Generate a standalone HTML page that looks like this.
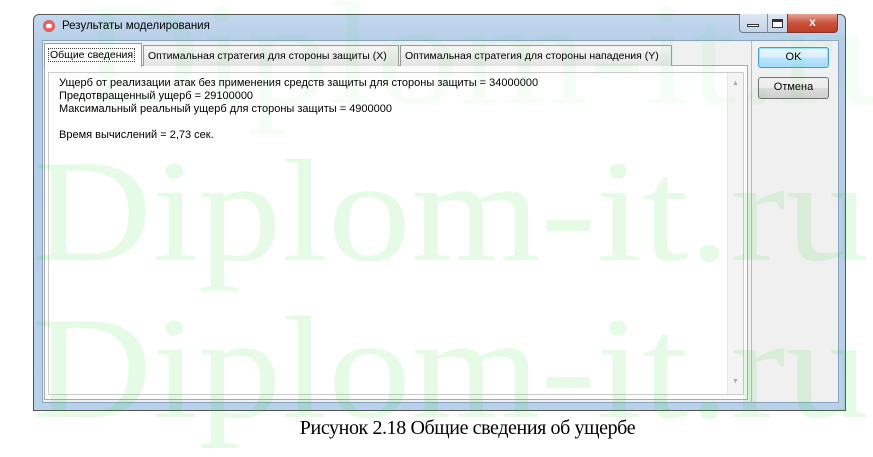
<!DOCTYPE html>
<html><head><meta charset="utf-8"><style>
*{margin:0;padding:0;box-sizing:border-box}
body{width:873px;height:457px;background:#fff;position:relative;overflow:hidden;font-family:"Liberation Sans",sans-serif}
.abs{position:absolute}
.frame{left:33px;top:14px;width:813px;height:397px;border:1px solid #555;border-radius:6px 6px 0 0;background:linear-gradient(#c4d8ee,#b5cde8 30px,#b9d2eb);}
.client{left:42px;top:40px;width:797px;height:363px;background:#f0f0f0;border:1px solid #8aa5c4}
.t{font-size:11px;color:#000;white-space:nowrap}
.tab{top:45px;height:21px;border:1px solid #999;border-bottom:none;background:linear-gradient(#f6f6f6,#e4e4e4);font-size:10.5px;padding:4px 4px 0;white-space:nowrap}
.btn{left:758px;width:71px;height:21px;border:1px solid #707070;border-radius:3px;background:linear-gradient(#f2f2f2,#ebebeb 50%,#dcdcdc 50%,#cfcfcf);font-size:11px;text-align:center;line-height:19px}
.wm{left:32px;font-family:"Liberation Serif",serif;font-size:146px;color:rgba(0,220,0,0.1);white-space:nowrap;transform-origin:0 0;transform:scaleX(1.14);line-height:1}
</style></head><body>
<div class="abs frame"></div>
<div class="abs" style="left:43px;top:20px;width:12px;height:12px;border-radius:50%;background:radial-gradient(#f88,#d33);"></div>
<div class="abs" style="left:46px;top:24px;width:6px;height:4px;border-radius:2px;background:#fff"></div>
<div class="abs t" style="left:62px;top:20px;font-size:11.5px">Результаты моделирования</div>
<div class="abs" style="left:739px;top:14px;width:49px;height:19px;border:1px solid #6b7c90;border-top:none;border-radius:0 0 0 4px;background:linear-gradient(#dfe8f3,#c3d3e6)"></div>
<div class="abs" style="left:767px;top:14px;width:1px;height:19px;background:#7d8da0"></div>
<div class="abs" style="left:747px;top:24px;width:12px;height:3px;border:1px solid #333;background:#fff"></div>
<div class="abs" style="left:772px;top:19px;width:11px;height:9px;border:1px solid #333;border-top-width:3px;background:#fff"></div>
<div class="abs" style="left:787px;top:14px;width:51px;height:19px;border:1px solid #7a3a32;border-top:none;border-radius:0 0 4px 0;background:linear-gradient(#e8a493,#c9523d 50%,#c23a22);color:#fff;font-weight:bold;font-size:12px;text-align:center;line-height:17px">x</div>
<div class="abs client"></div>
<div class="abs" style="left:751px;top:41px;width:1px;height:361px;background:#bbb"></div>
<div class="abs" style="left:44px;top:65px;width:704px;height:335px;border:1px solid #aaa;background:#fcfcfc"></div>
<div class="abs" style="left:48px;top:72px;width:696px;height:323px;border:1px solid #ccc;background:#fff"></div>
<div class="abs" style="left:727px;top:73px;width:16px;height:321px;background:#f4f4f4;border-left:1px solid #e6e6e6"></div>
<div class="abs" style="left:732px;top:80px;font-size:7px;color:#aaa">▲</div>
<div class="abs" style="left:732px;top:378px;font-size:7px;color:#aaa">▼</div>
<div class="abs tab" style="left:143px;width:256px">Оптимальная стратегия для стороны защиты (X)</div>
<div class="abs tab" style="left:400px;width:272px">Оптимальная стратегия для стороны нападения (Y)</div>
<div class="abs tab" style="left:44px;top:43px;width:98px;height:24px;background:#fcfcfc;padding-top:5px"><span style="outline:1px dotted #444;padding:0 1px">Общие сведения</span></div>
<div class="abs t" style="left:59px;top:77px;line-height:13px">Ущерб от реализации атак без применения средств защиты для стороны защиты = 34000000<br>Предотвращенный ущерб = 29100000<br>Максимальный реальный ущерб для стороны защиты = 4900000<br><br>Время вычислений = 2,73 сек.</div>
<div class="abs btn" style="top:47px;border-color:#3c9fd8;box-shadow:inset 0 0 0 1px #9fe0ff;background:linear-gradient(#eaf6fd,#d9f0fc 50%,#bee6fd 50%,#a7d9f5)">OK</div>
<div class="abs btn" style="top:77px;height:22px">Отмена</div>
<div class="abs" style="left:0;top:417px;width:873px;text-align:center;font-family:'Liberation Serif',serif;font-size:20px;letter-spacing:-0.4px;padding-left:62px">Рисунок 2.18 Общие сведения об ущербе</div>
<div class="abs wm" style="top:-19px;left:80px;color:rgba(0,220,0,0.04)">Diplom-it.ru</div>
<div class="abs wm" style="top:138px">Diplom-it.ru</div>
<div class="abs wm" style="top:295px">Diplom-it.ru</div>
</body></html>
